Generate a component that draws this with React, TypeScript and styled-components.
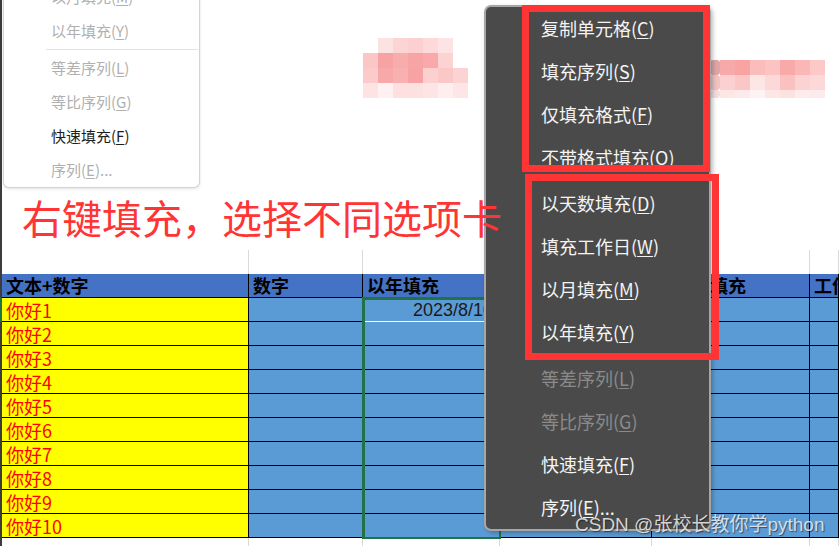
import styled, { createGlobalStyle } from "styled-components";

const GlobalStyle = createGlobalStyle`
  html, body {
    margin: 0;
    padding: 0;
    background: #ffffff;
  }
  body {
    font-family: "Noto Sans CJK SC", "Liberation Sans", sans-serif;
  }
`;

// 左侧细条 + A..F 列
const COLS = "2px 247px 114px 137px 152px 158px 1fr";

const headers = ["文本+数字", "数字", "以年填充", "以月填充", "以天数填充", "工作日填充"];
const rows = Array.from({ length: 10 }, (_, i) => `你好${i + 1}`);

type MenuItem = { label: string; key: string; tail?: string; off?: boolean };

const darkGroups: MenuItem[][] = [
  [
    { label: "复制单元格", key: "C" },
    { label: "填充序列", key: "S" },
    { label: "仅填充格式", key: "F" },
    { label: "不带格式填充", key: "O" },
  ],
  [
    { label: "以天数填充", key: "D" },
    { label: "填充工作日", key: "W" },
    { label: "以月填充", key: "M" },
    { label: "以年填充", key: "Y" },
  ],
  [
    { label: "等差序列", key: "L", off: true },
    { label: "等比序列", key: "G", off: true },
    { label: "快速填充", key: "F" },
    { label: "序列", key: "E", tail: "..." },
  ],
];

const lightGroups: MenuItem[][] = [
  [
    { label: "以月填充", key: "M", off: true },
    { label: "以年填充", key: "Y", off: true },
  ],
  [
    { label: "等差序列", key: "L", off: true },
    { label: "等比序列", key: "G", off: true },
    { label: "快速填充", key: "F" },
    { label: "序列", key: "E", tail: "...", off: true },
  ],
];

const mosaicA = [
  ["", "#fde2e2", "#fcd4d4", "#fcd0d0", "#fdd9d9", "#fde3e3", ""],
  ["#fbc6c6", "#f7a3a3", "#f8adad", "#f7a4a4", "#f9a9a9", "#fcd2d2", ""],
  ["#fccaca", "#f8a8a8", "#f9b0b0", "#f8a3a3", "#fdd0d0", "#fbc8c8", "#fcd3d3"],
  ["#fde3e3", "#fff1f1", "#fee0e0", "#fde0e0", "#fde5e5", "#feeeee", "#fee6e6"],
];

const mosaicB = [
  ["#dfa6a6", "#f7a8a8", "#f9a3a3", "#fbbcbc", "#fcc3c3", "#f8aaaa", "#fbb6b6", "#fcc8c8"],
  ["#efc3c3", "#fcd0d0", "#fbc6c6", "#fde6e6", "#fdd8d8", "#fbc0c0", "#fcd3d3", "#fdd8d8"],
  ["#f6dddd", "#fde6e6", "#fdeaea", "#fff2f2", "#fde6e6", "#fde2e2", "#feecec", "#fdeaea"],
];

export default function App() {
  return (
    <>
      <GlobalStyle />
      <Page>
        <TopArea>
          <BigNote>右键填充，选择不同选项卡</BigNote>
        </TopArea>
        <Row $h={24}>
          <Strip />
          {headers.map((h) => (
            <GridLine key={h} />
          ))}
        </Row>
        <Row $h={24}>
          <Strip />
          {headers.map((h) => (
            <HeadCell key={h}>{h}</HeadCell>
          ))}
        </Row>
        {rows.map((name, i) => (
          <Row $h={24} key={name}>
            <Strip $active={i === 0} />
            <DataCell $fill="#ffff00">{name}</DataCell>
            <DataCell $fill="#5b9bd5" />
            <DataCell $fill="#5b9bd5" $align="right" $white={i === 0}>
              {i === 0 ? "2023/8/10" : ""}
            </DataCell>
            <DataCell $fill="#5b9bd5" />
            <DataCell $fill="#5b9bd5" />
            <DataCell $fill="#5b9bd5" />
          </Row>
        ))}
        <Row $h={8}>
          <Strip />
          {headers.map((h) => (
            <GridLine key={h} />
          ))}
        </Row>

        <Selection />

        <Mosaic style={{ left: 363, top: 38 }} width={107} height={60}>
          {mosaicA.map((r, y) =>
            r.map((c, x) =>
              c ? <rect key={`${x}-${y}`} x={x * 15} y={y * 15} width={15} height={15} fill={c} /> : null
            )
          )}
        </Mosaic>
        <Mosaic style={{ left: 710, top: 60 }} width={125} height={40}>
          {mosaicB.map((r, y) =>
            r.map((c, x) => (
              <rect
                key={`${x}-${y}`}
                x={x === 0 ? 0 : 10 + (x - 1) * 15}
                y={y * 15}
                width={x === 0 ? 10 : 15}
                height={y === 2 ? 8 : 15}
                rx={x === 0 ? 3 : 0}
                fill={c}
              />
            ))
          )}
        </Mosaic>

        <LightMenu>
          {lightGroups.map((g, gi) => (
            <div key={gi}>
              {gi > 0 && <LightSep />}
              {g.map((it) => (
                <LightItem key={it.label} $off={it.off}>
                  {it.label}(<u>{it.key}</u>){it.tail}
                </LightItem>
              ))}
            </div>
          ))}
        </LightMenu>

        <DarkMenu>
          {darkGroups.map((g, gi) => (
            <div key={gi}>
              {gi > 0 && <DarkSep />}
              {g.map((it) => (
                <DarkItem key={it.label} $off={it.off}>
                  {it.label}(<u>{it.key}</u>){it.tail}
                </DarkItem>
              ))}
            </div>
          ))}
        </DarkMenu>

        <RedBox $l={522} $t={5} $w={188} $h={167} />
        <RedBox $l={525} $t={174} $w={194} $h={186} />

        <Watermark>CSDN @张校长教你学python</Watermark>
      </Page>
    </>
  );
}

const Page = styled.div`
  position: relative;
  width: 839px;
  height: 546px;
  overflow: hidden;
  background: #ffffff;
`;

const TopArea = styled.div`
  height: 250px;
  box-sizing: border-box;
  border-left: 2px solid #3c3c3c;
  padding: 197px 0 0 20px;
`;

// 标注文字画在右键菜单之上
const BigNote = styled.div`
  position: relative;
  z-index: 5;
  display: inline-block;
  font-size: 40px;
  line-height: 40px;
  color: #ff3535;
  white-space: nowrap;
`;

const Row = styled.div<{ $h: number }>`
  display: grid;
  grid-template-columns: ${COLS};
  height: ${(p) => p.$h}px;
`;

const Strip = styled.div<{ $active?: boolean }>`
  background: ${(p) => (p.$active ? "#217346" : "#3c3c3c")};
`;

const GridLine = styled.div`
  border-right: 1px solid #d9d9d9;
`;

const HeadCell = styled.div`
  background: #4472c4;
  border-right: 1px solid #000;
  border-bottom: 1px solid #000;
  padding-left: 4px;
  font-size: 18px;
  font-weight: 700;
  line-height: 23px;
  color: #000;
  white-space: nowrap;
  overflow: hidden;
`;

const DataCell = styled.div<{ $fill: string; $align?: string; $white?: boolean }>`
  background: ${(p) => p.$fill};
  border-right: 1px solid #000;
  border-bottom: 1px solid ${(p) => (p.$white ? "#ffffff" : "#000")};
  padding: 0 6px 0 4px;
  text-align: ${(p) => p.$align || "left"};
  font-family: ${(p) =>
    p.$align === "right" ? `"Liberation Sans", sans-serif` : `"Noto Sans CJK SC", sans-serif`};
  font-size: 18px;
  line-height: 25px;
  color: ${(p) => (p.$align === "right" ? "#1a1a1a" : "#ff0000")};
  white-space: nowrap;
  overflow: hidden;
`;

const Selection = styled.div`
  position: absolute;
  left: 362px;
  top: 297px;
  width: 139px;
  height: 242px;
  box-sizing: border-box;
  border: 3px solid #217346;
  border-width: 3px 2px 2px 3px;
`;

const Mosaic = styled.svg`
  position: absolute;
  display: block;
`;

const LightMenu = styled.div`
  position: absolute;
  left: 3px;
  top: -20px;
  width: 197px;
  box-sizing: border-box;
  background: #ffffff;
  border: 1px solid #d3d3d3;
  border-top: none;
  border-radius: 0 0 6px 6px;
  box-shadow: 0 1px 3px rgba(0, 0, 0, 0.12);
`;

const LightItem = styled.div<{ $off?: boolean }>`
  height: 34px;
  line-height: 34px;
  padding-left: 47px;
  font-size: 15px;
  color: ${(p) => (p.$off ? "#b0b0b0" : "#1e1e1e")};
  white-space: nowrap;

  u {
    text-underline-offset: 2px;
  }
`;

const LightSep = styled.div`
  height: 3px;
  margin: 0 1px 0 42px;
  border-top: 1px solid #e2e2e2;
  box-sizing: border-box;
  transform: translateY(1px);
`;

const DarkMenu = styled.div`
  position: absolute;
  left: 484px;
  top: 5px;
  width: 227px;
  box-sizing: border-box;
  background: #4a4a4a;
  border: 2px solid #a6a6a6;
  border-radius: 7px;
  box-shadow: 2px 2px 4px rgba(0, 0, 0, 0.25);
`;

const DarkItem = styled.div<{ $off?: boolean }>`
  height: 43px;
  line-height: 43px;
  padding-left: 55px;
  font-size: 18px;
  color: ${(p) => (p.$off ? "#8a8a8a" : "#f4f4f4")};
  white-space: nowrap;

  u {
    text-underline-offset: 2px;
  }
`;

const DarkSep = styled.div`
  height: 3px;
`;

const RedBox = styled.div<{ $l: number; $t: number; $w: number; $h: number }>`
  position: absolute;
  left: ${(p) => p.$l}px;
  top: ${(p) => p.$t}px;
  width: ${(p) => p.$w}px;
  height: ${(p) => p.$h}px;
  box-sizing: border-box;
  border: 7px solid #ff3535;
`;

const Watermark = styled.div`
  position: absolute;
  left: 575px;
  top: 512px;
  font-family: "Liberation Sans", "Noto Sans CJK SC", sans-serif;
  font-size: 19px;
  line-height: 25px;
  color: rgba(240, 240, 240, 0.85);
  text-shadow: 1px 1px 1px rgba(0, 0, 0, 0.5);
  white-space: nowrap;
`;
